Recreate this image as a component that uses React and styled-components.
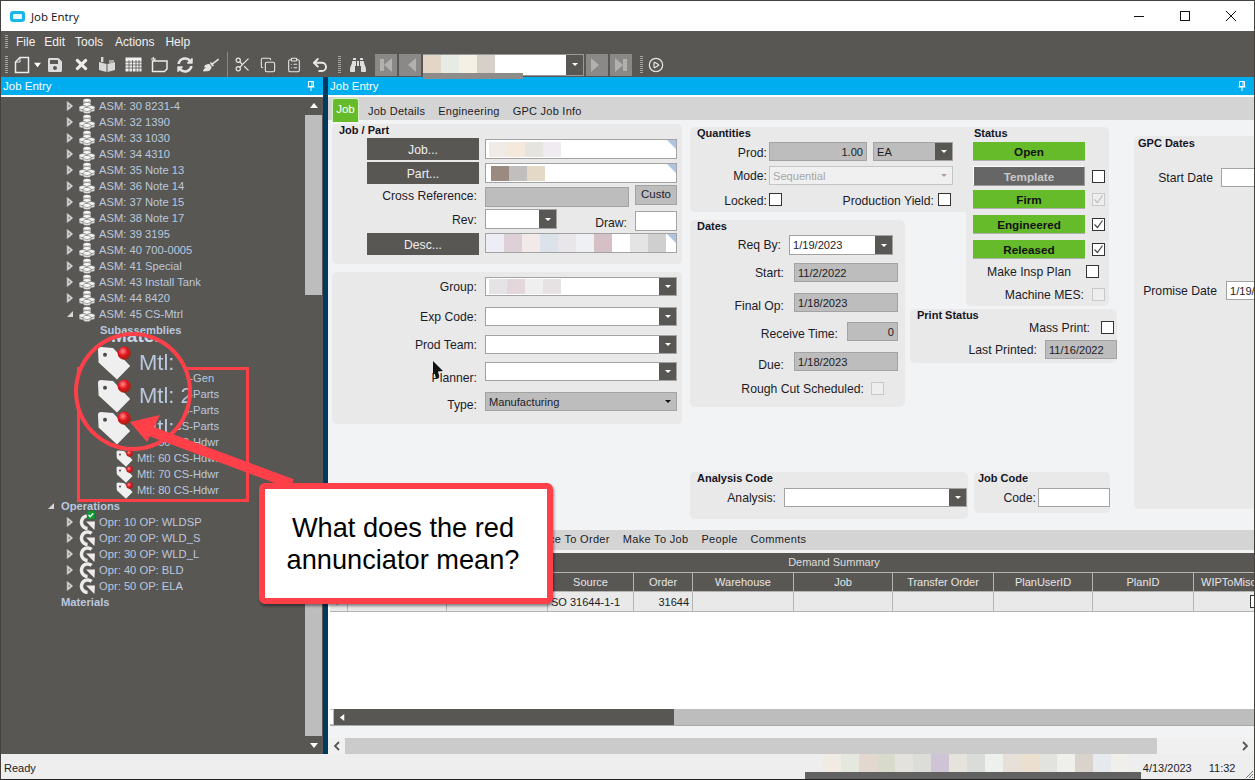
import React from "react";
import styled, { createGlobalStyle } from "styled-components";
import { Scissors, Copy, ClipboardList, Undo2, CirclePlay } from "lucide-react";
import { FaBroom, FaBinoculars, FaSave, FaTimes, FaSyncAlt } from "react-icons/fa";

const RED = "#ff4049";
const DARK = "#595754";
const BLUE = "#00adef";
const GREEN = "#66bb2a";
const FONT = `"Liberation Sans", Arial, sans-serif`;

const Global = createGlobalStyle`
  html, body { margin: 0; padding: 0; background: #fff; }
  * { box-sizing: border-box; }
`;

const Window = styled.div`
  position: relative;
  width: 1255px;
  height: 780px;
  border: 1px solid #45413c;
  border-bottom-color: #222;
  display: flex;
  flex-direction: column;
  overflow: hidden;
  font-family: ${FONT};
  font-size: 12.2px;
  color: #1c1c28;
  background: #eee;
`;

/* title bar */
const TitleBar = styled.div`
  height: 30px;
  flex: none;
  background: #fff;
  display: flex;
  align-items: center;
  padding-left: 9px;
  font-family: "Open Sans", ${FONT};
  font-size: 11.5px;
  color: #111;
`;
const AppIcon = styled.span`
  width: 15px;
  height: 11px;
  border-radius: 3px;
  background: #18b7e8;
  margin-right: 6px;
  display: flex;
  align-items: center;
  justify-content: center;
  &::after {
    content: "";
    width: 9px;
    height: 5px;
    border-radius: 1px;
    background: #eaf8fd;
  }
`;
const WinControls = styled.div`
  margin-left: auto;
  display: flex;
`;
const WinButton = styled.span`
  width: 46px;
  height: 30px;
  display: flex;
  align-items: center;
  justify-content: center;
`;

/* menu and tool bars */
const Bars = styled.div`
  height: 46px;
  flex: none;
  background: ${DARK};
  color: #f1f1f1;
`;
const MenuRow = styled.div`
  height: 21px;
  display: flex;
  align-items: center;
  padding-left: 4px;
`;
const Grip = styled.span`
  width: 3px;
  height: ${(p) => p.$h || 14}px;
  flex: none;
  margin-left: ${(p) => p.$ml || 0}px;
  margin-right: ${(p) => p.$mr || 0}px;
  background: repeating-linear-gradient(to bottom, #a8a6a3 0 1px, transparent 1px 2px);
`;
const MenuItem = styled.span`
  margin-left: ${(p) => p.$ml}px;
  font-size: 12px;
`;
const ToolRow = styled.div`
  height: 25px;
  display: flex;
  align-items: center;
  padding-left: 4px;
`;
const ToolBtn = styled.span`
  width: ${(p) => p.$w || 26}px;
  height: 22px;
  flex: none;
  margin-left: ${(p) => p.$ml || 0}px;
  margin-right: ${(p) => p.$mr || 0}px;
  display: flex;
  align-items: center;
  justify-content: center;
  color: #e8e8e8;
`;
const ToolSep = styled.span`
  width: 1px;
  height: 25px;
  flex: none;
  margin: 0 1px 0 3px;
  background: #8c8a87;
`;
const NavBtn = styled.span`
  width: 22px;
  height: 22px;
  flex: none;
  margin-right: 2px;
  background: #8b8987;
  display: flex;
  align-items: center;
  justify-content: center;
`;
const NavSvg = styled.svg`
  width: 16px;
  height: 16px;
  transform: ${(p) => (p.$flip ? "scaleX(-1)" : "none")};
`;
const RecordCombo = styled.div`
  width: 161px;
  height: 22px;
  flex: none;
  margin-right: 2px;
  background: #fff;
  border: 1px solid #9a9a9a;
  border-left: none;
  display: flex;
  position: relative;
`;
const Swatches = styled.div`
  display: flex;
  height: ${(p) => p.$h}px;
  margin-left: ${(p) => p.$ml || 0}px;
  flex: none;
`;
const Swatch = styled.span`
  width: 18px;
  height: 100%;
  flex: none;
  background: ${(p) => p.$c};
`;
const RecordStrip = styled.span`
  position: absolute;
  left: 0;
  top: 18px;
  width: 100px;
  height: 6px;
  background: #8e8c8a;
`;

/* main split */
const Main = styled.div`
  flex: 1;
  min-height: 0;
  display: flex;
`;
const LeftPane = styled.div`
  width: 322px;
  flex: none;
  display: flex;
  flex-direction: column;
`;
const Splitter = styled.div`
  width: 5px;
  flex: none;
  background: #003a5c;
`;
const RightPane = styled.div`
  flex: 1;
  min-width: 0;
  display: flex;
  flex-direction: column;
  background: #f2f3f5;
`;
const PaneHeader = styled.div`
  height: 20px;
  flex: none;
  background: ${BLUE};
  border-bottom: 2px solid #fff;
  color: #fff;
  font-size: 11.5px;
  display: flex;
  align-items: center;
  justify-content: space-between;
  padding: 0 8px 0 ${(p) => p.$pl}px;
`;
const TreeWrap = styled.div`
  flex: 1;
  min-height: 0;
  display: flex;
  background: ${DARK};
`;
const Tree = styled.div`
  flex: 1;
  padding-top: 1px;
  overflow: hidden;
`;
const TreeRow = styled.div`
  height: 16px;
  display: flex;
  align-items: center;
  padding-left: ${(p) => p.$indent}px;
  color: #b9c8de;
  font-size: 11.2px;
  font-weight: ${(p) => (p.$bold ? 700 : 400)};
  white-space: nowrap;
`;
const Expander = styled.svg`
  width: 8px;
  height: 12px;
  flex: none;
  margin-right: ${(p) => p.$mr}px;
`;
const TreeIcon = styled.svg`
  width: 16px;
  height: 16px;
  flex: none;
  overflow: visible;
  margin-right: 4px;
`;
const VScroll = styled.div`
  width: 17px;
  flex: none;
  margin-right: 1px;
  display: flex;
  flex-direction: column;
  background: #bdbdbd;
`;
const ScrollEnd = styled.div`
  height: 18px;
  flex: none;
  background: ${DARK};
  display: flex;
  align-items: center;
  justify-content: center;
`;
const VTrack = styled.div`
  height: ${(p) => p.$h}px;
  flex: ${(p) => (p.$h ? "none" : 1)};
  background: ${(p) => (p.$thumb ? DARK : "#bdbdbd")};
`;

/* tabs */
const TabBar = styled.div`
  height: 23px;
  flex: none;
  background: #d4d4d4;
  display: flex;
  padding: 1px 0 0 4px;
`;
const ActiveTab = styled.div`
  width: 27px;
  height: 24px;
  background: ${GREEN};
  border: 1px solid #d8f0c8;
  border-bottom: none;
  border-radius: 3px 3px 0 0;
  color: #fff;
  font-size: 11.5px;
  text-align: center;
  padding-top: 4px;
  margin-right: 9px;
`;
const Tab = styled.div`
  font-size: 11px;
  letter-spacing: 0.25px;
  margin: 7px 13px 0 0;
  white-space: nowrap;
`;

/* form */
const FormArea = styled.div`
  height: 410px;
  flex: none;
  display: flex;
  padding: 4px 0 0 4px;
  overflow: hidden;
`;
const Column = styled.div`
  width: ${(p) => p.$w}px;
  flex: none;
  display: flex;
  flex-direction: column;
  gap: 8px;
`;
const MidColumn = styled.div`
  width: 427px;
  flex: none;
  margin: 3px 0 0 8px;
`;
const MidGrid = styled.div`
  display: grid;
  grid-template-columns: 215px 5px 56px 143px 8px;
  grid-template-rows: 85px 8px 86px 3px 54px 44px;
`;
const Panel = styled.section`
  background: #e9e9e9;
  border-radius: ${(p) => p.$radius || "5px"};
  height: ${(p) => (p.$h ? `${p.$h}px` : "auto")};
  width: ${(p) => (p.$w ? `${p.$w}px` : "auto")};
  padding-top: ${(p) => p.$pt || 0}px;
  overflow: hidden;
  grid-column: ${(p) => p.$col || "auto"};
  grid-row: ${(p) => p.$row || "auto"};
`;
const PanelTitle = styled.div`
  font-weight: 700;
  font-size: 11px;
  line-height: 12px;
  height: 12px;
  padding-left: ${(p) => p.$pl || 7}px;
  color: #15151f;
`;
const Row = styled.div`
  display: flex;
  align-items: center;
  height: ${(p) => p.$h}px;
  margin-top: ${(p) => p.$mt || 0}px;
`;
const Label = styled.label`
  width: ${(p) => p.$w}px;
  flex: none;
  text-align: right;
  margin-right: ${(p) => p.$gap}px;
  white-space: nowrap;
  padding-top: ${(p) => p.$pt || 0}px;
`;
const tones = {
  white: "#fff",
  gray: "#bdbdbd",
  disabled: "#f0f0f0",
};
const Field = styled.div`
  position: relative;
  width: ${(p) => p.$w}px;
  height: ${(p) => p.$h || 19}px;
  flex: none;
  background: ${(p) => tones[p.$tone || "white"]};
  border: 1px solid ${(p) => (p.$tone === "disabled" ? "#c4c4c4" : "#a3a3a3")};
  margin-top: ${(p) => p.$mt || 0}px;
  align-self: ${(p) => p.$self || "auto"};
  margin-left: ${(p) => p.$ml || 0}px;
  display: flex;
  align-items: center;
  justify-content: ${(p) => (p.$right ? "flex-end" : "flex-start")};
  padding: 0 3px;
  font-size: 11.1px;
  color: ${(p) => (p.$muted ? "#a5a5a5" : "#1c1c28")};
  overflow: hidden;
  white-space: nowrap;
`;
const Corner = styled.span`
  position: absolute;
  top: 0;
  right: 0;
  border-style: solid;
  border-width: 0 9px 9px 0;
  border-color: transparent #aec4e0 transparent transparent;
`;
const Caret = styled.span`
  position: absolute;
  top: 0;
  right: 0;
  bottom: 0;
  width: ${(p) => p.$w || 17}px;
  background: ${(p) => (p.$plain ? "transparent" : DARK)};
  display: flex;
  align-items: center;
  justify-content: center;
  &::after {
    content: "";
    border-style: solid;
    border-width: 3px 3.5px 0;
    border-color: ${(p) => p.$color || "#fff"} transparent transparent;
  }
`;
const DarkButton = styled.div`
  width: 112px;
  height: 22px;
  flex: none;
  margin: 0 6px 0 35px;
  padding-top: 1px;
  background: ${DARK};
  color: #eee;
  display: flex;
  align-items: center;
  justify-content: center;
`;
const CustoButton = styled.div`
  width: 42px;
  height: 20px;
  flex: none;
  align-self: flex-start;
  margin-left: 6px;
  background: #bdbdbd;
  border: 1px solid #a3a3a3;
  font-size: 11.5px;
  text-align: center;
  line-height: 16px;
`;
const Check = styled.span`
  width: 13px;
  height: 13px;
  flex: none;
  border: 1px solid ${(p) => (p.$off ? "#c9c9c9" : "#333")};
  background: ${(p) => (p.$off ? "#eeeeee" : "#fff")};
  margin-left: ${(p) => p.$ml || 0}px;
  display: flex;
  align-items: center;
  justify-content: center;
`;
const StatusButton = styled.div`
  width: 112px;
  height: ${(p) => p.$h || 19}px;
  flex: none;
  margin-left: 7px;
  padding-top: 1px;
  background: ${(p) => (p.$gray ? "#666" : GREEN)};
  color: ${(p) => (p.$gray ? "#c8c8c8" : "#111")};
  font-weight: 700;
  font-size: 11.7px;
  display: flex;
  align-items: center;
  justify-content: center;
  border: ${(p) => (p.$gray ? "1px solid #fff" : "none")};
  border-right-color: ${(p) => (p.$gray ? "#9c9c9c" : "transparent")};
  border-bottom: 1px solid ${(p) => (p.$gray ? "#9c9c9c" : "#b0b0b0")};
`;
const BottomRow = styled.div`
  display: flex;
  align-items: flex-start;
  gap: 6px;
  margin-top: 65px;
`;
const GpcPanel = styled(Panel)`
  width: 125px;
  height: 373px;
  flex: none;
  margin: 12px 0 0 17px;
  padding-top: 1px;
`;

/* lower grid */
const SubTabs = styled.div`
  height: 20px;
  flex: none;
  background: #d4d4d4;
  display: flex;
  align-items: center;
  padding: 0 0 2px 190px;
  gap: 13px;
  font-size: 11px;
  letter-spacing: 0.32px;
  margin-bottom: 3px;
  white-space: nowrap;
`;
const GridWrap = styled.div`
  flex: 1;
  min-height: 0;
  padding-left: 2px;
  display: flex;
  flex-direction: column;
  background: #fff;
  overflow: hidden;
`;
const GridTitle = styled.div`
  width: 1008px;
  height: 19px;
  flex: none;
  background: ${DARK};
  color: #ddd;
  font-size: 11px;
  text-align: center;
  line-height: 19px;
`;
const GridLine = styled.div`
  display: flex;
  height: 20px;
  flex: none;
  width: 1008px;
  background: ${(p) => (p.$head ? DARK : "#e9e9e9")};
  color: ${(p) => (p.$head ? "#e6e6e6" : "#1c1c28")};
  border-bottom: 1px solid #b4b4b4;
  border-top: ${(p) => (p.$head ? "1px solid #b4b4b4" : "none")};
`;
const GridCell = styled.div`
  width: ${(p) => p.$w}px;
  flex: none;
  border-right: 1px solid #b4b4b4;
  font-size: 11px;
  display: flex;
  align-items: center;
  justify-content: ${(p) => p.$justify || "center"};
  padding: 0 3px 0 ${(p) => p.$pl || 3}px;
  white-space: nowrap;
  overflow: hidden;
`;
const GridBlank = styled.div`
  flex: 1;
`;
const GridScroll = styled.div`
  height: 17px;
  flex: none;
  background: #bdbdbd;
  border-bottom: 1px solid #a9a9a9;
  display: flex;
`;
const GridTick = styled.span`
  width: 3px;
  flex: none;
  background: #fff;
  margin: 1px 1px 1px 0;
`;
const GridThumb = styled.div`
  width: 340px;
  flex: none;
  background: ${DARK};
  display: flex;
  align-items: center;
  padding-left: 5px;
`;
const Gap = styled.div`
  height: ${(p) => p.$h}px;
  flex: none;
`;
const OuterScroll = styled.div`
  height: 16px;
  flex: none;
  background: #f0f0f0;
  display: flex;
  align-items: center;
  padding-right: 5px;
`;
const OuterArrow = styled.span`
  width: 17px;
  flex: none;
  display: flex;
  align-items: center;
  justify-content: center;
`;
const OuterThumb = styled.div`
  width: 812px;
  height: 16px;
  flex: none;
  margin-right: auto;
  background: #cbcbcb;
`;

/* status bar */
const StatusBar = styled.div`
  height: 25px;
  flex: none;
  background: #eee;
  display: flex;
  padding-left: 3px;
  position: relative;
`;
const StatusText = styled.span`
  margin: ${(p) => `8px 0 0 ${p.$ml}px`};
  font-size: 11px;
  white-space: nowrap;
`;
const Redacted = styled.div`
  width: 336px;
  flex: none;
  margin-left: 769px;
  display: flex;
  flex-direction: column;
`;
const RedactBar = styled.div`
  height: 7px;
  background: #616161;
`;
const ResizeGrip = styled.svg`
  position: absolute;
  right: 0;
  bottom: 0;
  width: 10px;
  height: 10px;
`;

/* annotation drawn on top of the screenshot */
const ArrowLayer = styled.svg`
  position: absolute;
  left: -1px;
  top: -1px;
  width: 1255px;
  height: 780px;
  pointer-events: none;
`;
const RedBox = styled.div`
  position: absolute;
  left: 76px;
  top: 366px;
  width: 172px;
  height: 135px;
  border: 3px solid ${RED};
`;
const Magnifier = styled.div`
  position: absolute;
  left: 73px;
  top: 331px;
  width: 118px;
  height: 119px;
  border: 4px solid ${RED};
  border-radius: 50%;
  background: ${DARK};
  overflow: hidden;
`;
const MagFragment = styled.div`
  height: 11px;
  overflow: hidden;
  color: #cbd6e8;
  font-weight: 700;
  font-size: 19px;
  line-height: 0px;
  padding-left: 33px;
`;
const MagRow = styled.div`
  height: 32.5px;
  display: flex;
  align-items: center;
  padding-left: 19px;
  color: #b9c8de;
  font-size: 22px;
  white-space: nowrap;
  filter: blur(0.3px);
  span { margin-left: 8px; }
`;
const Callout = styled.div`
  position: absolute;
  left: 258px;
  top: 482px;
  width: 294px;
  height: 121px;
  background: #fff;
  border: 6px solid ${RED};
  border-radius: 6px;
  box-shadow: 1px 2px 3px rgba(0, 0, 0, 0.45);
  color: #000;
  font-size: 27.2px;
  line-height: 32px;
  text-align: center;
  padding: 23px 6px 0 0;
  white-space: nowrap;
`;
const MouseCursor = styled.svg`
  position: absolute;
  left: 431px;
  top: 360px;
  width: 12px;
  height: 18px;
`;

const Tri = ({ dir = "down", color = "#fff", size = 8 }) => {
  const pts = {
    up: "0,6 4,1 8,6",
    down: "0,2 8,2 4,7",
    left: "6,0 6,8 1,4",
    right: "2,0 2,8 7,4",
  };
  return (
    <svg width={size} height={size} viewBox="0 0 8 8">
      <polygon points={pts[dir]} fill={color} />
    </svg>
  );
};

const ExpandClosed = () => (
  <Expander $mr={5} viewBox="0 0 8 12">
    <polygon points="1,1 7,6 1,11" fill="#e6e6e6" stroke="#8f8f8f" strokeWidth="0.8" />
    <polygon points="2.5,4 5,6 2.5,8" fill="#8c8c8c" />
  </Expander>
);
const ExpandOpen = ({ mr = 5 }) => (
  <Expander $mr={mr} viewBox="0 0 8 12">
    <polygon points="7,3 7,9 1,9" fill="#d6d6d6" />
  </Expander>
);

const AsmIcon = () => {
  const disk = (x, y, key) => (
    <g key={key}>
      <path d={`M${x - 3.9} ${y}v2.4a3.9 2 0 0 0 7.800 0V${y}z`} fill="#dedede" stroke={DARK} strokeWidth="0.5" />
      <ellipse cx={x} cy={y} rx="3.9" ry="2" fill="#f6f6f6" stroke={DARK} strokeWidth="0.5" />
    </g>
  );
  return (
    <TreeIcon viewBox="0 0 16 16">
      {disk(8, 2.4, "a")}
      {disk(8, 6.4, "b")}
      {disk(4, 9.6, "c")}
      {disk(12, 9.6, "d")}
      {disk(8, 11.4, "e")}
    </TreeIcon>
  );
};

const OprIcon = ({ done }) => (
  <TreeIcon viewBox="0 0 16 16">
    <path d="M12.600 3.400A6.200 6.200 0 1 0 8.600 14.400" fill="none" stroke="#ececec" strokeWidth="3.400" />
    <polygon points="7,7.600 16,7.600 15.400,16" fill="#ececec" />
    {done && (
      <g>
        <rect x="8" y="-3" width="8" height="8" fill="#0e9a35" stroke="#0b6d27" strokeWidth="0.4" />
        <path d="M9.600 1l1.600 1.800 3-3.400" fill="none" stroke="#fff" strokeWidth="1.400" />
      </g>
    )}
  </TreeIcon>
);

const TagSvg = styled.svg`
  width: ${(p) => p.$size}px;
  height: ${(p) => p.$size}px;
  flex: none;
  margin-right: ${(p) => p.$mr || 0}px;
  overflow: visible;
`;
const TagIcon = ({ size = 17, mr = 4 }) => (
  <TagSvg $size={size} $mr={mr} viewBox="0 0 17 17">
    <defs>
      <radialGradient id="ball" cx="0.4" cy="0.35" r="0.7">
        <stop offset="0" stopColor="#ff8a8a" />
        <stop offset="0.5" stopColor="#e0141c" />
        <stop offset="1" stopColor="#8f2a10" />
      </radialGradient>
    </defs>
    <path d="M0.500 2Q0.500 .5 2 .5L8 1 16.600 10 10 16.800 .8 8.200Z" fill="#efefef" />
    <circle cx="4" cy="4.400" r="1" fill="#4a4a4a" />
    <circle cx="13.600" cy="3.600" r="3.300" fill="url(#ball)" />
  </TagSvg>
);

const DocIcon = () => (
  <svg width="16" height="18" viewBox="0 0 16 18">
    <path d="M6 1.500h8.500v15H1.500V6z" fill="none" stroke="#ececec" strokeWidth="1.500" />
    <path d="M6 1.500V6H1.500" fill="none" stroke="#ececec" strokeWidth="1" />
  </svg>
);
const BookIcon = () => (
  <svg width="18" height="18" viewBox="0 0 18 18">
    <path d="M1 6l7.500 2v8L1 14zM17 6l-7.500 2v8L17 14z" fill="#d8d8d8" />
    <rect x="3" y="1" width="2.400" height="5" fill="#d8d8d8" />
    <rect x="11" y="4" width="5" height="3" fill="#a9a9a9" />
  </svg>
);
const TableIcon = () => (
  <svg width="17" height="15" viewBox="0 0 17 15">
    <rect x="0.500" y="0.500" width="16" height="14" fill="#f0f0f0" />
    <path d="M4 3v12M7.500 3v12M11 3v12M14 3v12M0 5h17M0 8h17M0 11h17" stroke={DARK} strokeWidth="0.800" />
  </svg>
);
const FolderIcon = () => (
  <svg width="17" height="17" viewBox="0 0 17 17">
    <path d="M1.500 5h14.500v8l-2.500 2.500H1.500z" fill="none" stroke="#ececec" strokeWidth="1.500" />
    <path d="M2 1l1.500 4M0 3h5" stroke="#ececec" strokeWidth="1.200" />
  </svg>
);
const NavIcon = ({ flip, bar }) => (
  <NavSvg $flip={flip} viewBox="0 0 16 16">
    {bar && <rect x="2" y="2" width="4" height="12" fill="#b3b1af" />}
    <polygon points="14,1 14,15 6,8" fill="#b3b1af" />
  </NavSvg>
);
const Tick = ({ color = "#444" }) => (
  <svg width="11" height="11" viewBox="0 0 11 11">
    <path d="M1.500 5.500l3 3 5-7" fill="none" stroke={color} strokeWidth="1.200" />
  </svg>
);
const PinIcon = () => (
  <svg width="8" height="10" viewBox="0 0 8 10">
    <path d="M1.500 .5h5v5h-5zM.5 6h7M4 6v4M5 1v4" fill="none" stroke="#fff" strokeWidth="1" />
  </svg>
);

const asmRows = [
  "30 8231-4", "32 1390", "33 1030", "34 4310", "35 Note 13", "36 Note 14", "37 Note 15",
  "38 Note 17", "39 3195", "40 700-0005", "41 Special", "43 Install Tank", "44 8420",
];
const mtlRows = [
  "10 CS-Gen", "20 CS-Parts", "30 CS-Parts", "40 CS-Parts", "50 CS-Hdwr", "60 CS-Hdwr", "70 CS-Hdwr", "80 CS-Hdwr",
];
const oprRows = ["10 OP: WLDSP", "20 OP: WLD_S", "30 OP: WLD_L", "40 OP: BLD", "50 OP: ELA"];

const recordColors = ["#e3d6c6", "#e6ebe3", "#f4f1e4", "#d6d0c8", "#fff"];
const jobColors = ["#f0ebe7", "#f5e9dc", "#e6e4de", "#f0ebf0"];
const partColors = ["#9b8a80", "#c0bfbd", "#e4d9c6"];
const descColors = ["#ecedf5", "#ddd0d6", "#f2e9e9", "#dce2e9", "#e8e6e9", "#eef0f3", "#d5c0c5", "#fff", "#e4e4e4", "#d0cfcf"];
const groupColors = ["#e6e3e6", "#e3d7dc", "#efefef", "#e6e2e4"];
const statusColors = [
  "#f0ece4", "#e5e8df", "#e2d8cf", "#d8dacb", "#e3e2dc", "#dcdcd8", "#cfc4d6", "#e6e2dc", "#d9dcd9",
  "#eef0ee", "#e6e0d9", "#ebe0d0", "#e2e2df", "#efefeb", "#d9d3cc", "#e6eaee", "#f0efeb",
];

const gridCols = [
  ["", 18], ["", 99], ["", 101], ["Source", 86], ["Order", 59], ["Warehouse", 101], ["Job", 99],
  ["Transfer Order", 101], ["PlanUserID", 99], ["PlanID", 101],
];

const paint = (colors) => colors.map((c, i) => <Swatch key={i} $c={c} />);

const Combo = ({ w, h, tone, mt, ml, children, caretColor, plain, muted }) => (
  <Field $w={w} $h={h} $tone={tone} $mt={mt} $ml={ml} $muted={muted}>
    {children}
    <Caret $color={caretColor} $plain={plain} />
  </Field>
);

export default function App() {
  return (
    <Window>
      <Global />
      <TitleBar>
        <AppIcon />
        Job Entry
        <WinControls>
          <WinButton>
            <svg width="10" height="10"><path d="M0 5.500h10" stroke="#111" /></svg>
          </WinButton>
          <WinButton>
            <svg width="10" height="10"><rect x=".5" y=".5" width="9" height="9" fill="none" stroke="#111" /></svg>
          </WinButton>
          <WinButton>
            <svg width="10" height="10"><path d="M0 0l10 10M10 0L0 10" stroke="#111" /></svg>
          </WinButton>
        </WinControls>
      </TitleBar>

      <Bars>
        <MenuRow>
          <Grip $h={13} />
          <MenuItem $ml={8}>File</MenuItem>
          <MenuItem $ml={9}>Edit</MenuItem>
          <MenuItem $ml={10}>Tools</MenuItem>
          <MenuItem $ml={12}>Actions</MenuItem>
          <MenuItem $ml={11}>Help</MenuItem>
        </MenuRow>
        <ToolRow>
          <Grip $h={18} />
          <ToolBtn $w={20} $ml={4}><DocIcon /></ToolBtn>
          <ToolBtn $w={10}><Tri color="#fff" size={7} /></ToolBtn>
          <ToolBtn><FaSave size={16} color="#dcdcdc" /></ToolBtn>
          <ToolBtn><FaTimes size={17} color="#ececec" /></ToolBtn>
          <ToolBtn><BookIcon /></ToolBtn>
          <ToolBtn><TableIcon /></ToolBtn>
          <ToolBtn><FolderIcon /></ToolBtn>
          <ToolBtn><FaSyncAlt size={16} color="#e4e4e4" /></ToolBtn>
          <ToolBtn><FaBroom size={16} color="#e4e4e4" /></ToolBtn>
          <ToolSep />
          <ToolBtn><Scissors size={17} strokeWidth={1.6} /></ToolBtn>
          <ToolBtn><Copy size={16} strokeWidth={1.6} /></ToolBtn>
          <ToolBtn><ClipboardList size={16} strokeWidth={1.6} /></ToolBtn>
          <ToolBtn><Undo2 size={18} strokeWidth={2.6} /></ToolBtn>
          <Grip $h={18} $ml={5} $mr={4} />
          <ToolBtn $mr={4}><FaBinoculars size={16} color="#dedede" /></ToolBtn>
          <NavBtn><NavIcon bar /></NavBtn>
          <NavBtn><NavIcon /></NavBtn>
          <RecordCombo>
            <Swatches $h={18}>{paint(recordColors)}</Swatches>
            <RecordStrip />
            <Caret />
          </RecordCombo>
          <NavBtn><NavIcon flip /></NavBtn>
          <NavBtn><NavIcon flip bar /></NavBtn>
          <Grip $h={18} $ml={6} />
          <ToolBtn $w={22} $ml={2}><CirclePlay size={16} strokeWidth={1.8} /></ToolBtn>
        </ToolRow>
      </Bars>

      <Main>
        <LeftPane>
          <PaneHeader $pl={2}>
            Job Entry
            <PinIcon />
          </PaneHeader>
          <TreeWrap>
            <Tree>
              {asmRows.map((r) => (
                <TreeRow key={r} $indent={65}>
                  <ExpandClosed />
                  <AsmIcon />
                  ASM: {r}
                </TreeRow>
              ))}
              <TreeRow $indent={65}>
                <ExpandOpen />
                <AsmIcon />
                ASM: 45 CS-Mtrl
              </TreeRow>
              <TreeRow $indent={99} $bold>Subassemblies</TreeRow>
              <TreeRow $indent={99} $bold>Materials</TreeRow>
              <TreeRow $indent={116} />
              {mtlRows.map((r) => (
                <TreeRow key={r} $indent={115}>
                  <TagIcon />
                  Mtl: {r}
                </TreeRow>
              ))}
              <TreeRow $indent={46} $bold>
                <ExpandOpen mr={6} />
                Operations
              </TreeRow>
              {oprRows.map((r, i) => (
                <TreeRow key={r} $indent={65}>
                  <ExpandClosed />
                  <OprIcon done={i === 0} />
                  Opr: {r}
                </TreeRow>
              ))}
              <TreeRow $indent={60} $bold>Materials</TreeRow>
            </Tree>
            <VScroll>
              <ScrollEnd><Tri dir="up" /></ScrollEnd>
              <VTrack $h={180} />
              <VTrack $h={190} $thumb />
              <VTrack />
              <ScrollEnd><Tri /></ScrollEnd>
            </VScroll>
          </TreeWrap>
        </LeftPane>
        <Splitter />
        <RightPane>
          <PaneHeader $pl={2}>
            Job Entry
            <PinIcon />
          </PaneHeader>
          <TabBar>
            <ActiveTab>Job</ActiveTab>
            <Tab>Job Details</Tab>
            <Tab>Engineering</Tab>
            <Tab>GPC Job Info</Tab>
          </TabBar>

          <FormArea>
            <Column $w={350}>
              <Panel $h={140}>
                <PanelTitle>Job / Part</PanelTitle>
                <Row $h={22} $mt={2}>
                  <DarkButton>Job...</DarkButton>
                  <Field $w={192} $h={20}><Swatches $h={15}>{paint(jobColors)}</Swatches><Corner /></Field>
                </Row>
                <Row $h={22} $mt={2}>
                  <DarkButton>Part...</DarkButton>
                  <Field $w={192} $h={20}><Swatches $h={15} $ml={2}>{paint(partColors)}</Swatches><Corner /></Field>
                </Row>
                <Row $h={22} $mt={1}>
                  <Label $w={145} $gap={8}>Cross Reference:</Label>
                  <Field $w={144} $h={20} $tone="gray" $mt={2} $self="flex-start" />
                  <CustoButton>Custo</CustoButton>
                </Row>
                <Row $h={22} $mt={2}>
                  <Label $w={145} $gap={8}>Rev:</Label>
                  <Field $w={72} $h={20} $self="flex-start"><Caret /></Field>
                  <Label $w={70} $gap={8} $pt={6}>Draw:</Label>
                  <Field $w={42} $h={20} $mt={2} $self="flex-start" />
                </Row>
                <Row $h={22} $mt={2}>
                  <DarkButton>Desc...</DarkButton>
                  <Field $w={192} $h={20} $self="flex-start"><Swatches $h={18} $ml={-3}>{paint(descColors)}</Swatches><Corner /></Field>
                </Row>
              </Panel>
              <Panel $h={152} $pt={5}>
                <Row $h={19}>
                  <Label $w={145} $gap={8}>Group:</Label>
                  <Combo w={192}><Swatches $h={15}>{paint(groupColors)}</Swatches></Combo>
                </Row>
                <Row $h={19} $mt={11}>
                  <Label $w={145} $gap={8}>Exp Code:</Label>
                  <Combo w={192} />
                </Row>
                <Row $h={19} $mt={9}>
                  <Label $w={145} $gap={8}>Prod Team:</Label>
                  <Combo w={192} />
                </Row>
                <Row $h={19} $mt={8}>
                  <Label $w={145} $gap={8} $pt={12}>Planner:</Label>
                  <Combo w={192} />
                </Row>
                <Row $h={19} $mt={11}>
                  <Label $w={145} $gap={8} $pt={6}>Type:</Label>
                  <Combo w={192} tone="gray" plain caretColor="#111">Manufacturing</Combo>
                </Row>
              </Panel>
            </Column>

            <MidColumn>
              <MidGrid>
                <Panel $col="1 / 4" $row="1" $radius="5px 0 0 5px">
                  <PanelTitle>Quantities</PanelTitle>
                  <Row $h={19} $mt={3}>
                    <Label $w={77} $gap={2} $pt={2}>Prod:</Label>
                    <Field $w={98} $tone="gray" $right>1.00</Field>
                    <Combo w={80} tone="gray" ml={6}>EA</Combo>
                  </Row>
                  <Row $h={19} $mt={5}>
                    <Label $w={77} $gap={2}>Mode:</Label>
                    <Combo w={184} tone="disabled" plain caretColor="#b39aa5" muted>Sequential</Combo>
                  </Row>
                  <Row $h={13} $mt={8}>
                    <Label $w={77} $gap={2} $pt={2}>Locked:</Label>
                    <Check />
                    <Label $w={152} $gap={4} $pt={2}>Production Yield:</Label>
                    <Check />
                  </Row>
                </Panel>
                <Panel $col="1" $row="3 / 7">
                  <PanelTitle>Dates</PanelTitle>
                  <Row $h={20} $mt={3}>
                    <Label $w={91} $gap={8}>Req By:</Label>
                    <Combo w={104} h={20}>1/19/2023</Combo>
                  </Row>
                  <Row $h={19} $mt={8}>
                    <Label $w={94} $gap={10}>Start:</Label>
                    <Field $w={104} $tone="gray">11/2/2022</Field>
                  </Row>
                  <Row $h={19} $mt={11}>
                    <Label $w={94} $gap={10} $pt={6}>Final Op:</Label>
                    <Field $w={104} $tone="gray">1/18/2023</Field>
                  </Row>
                  <Row $h={19} $mt={10}>
                    <Label $w={148} $gap={9} $pt={5}>Receive Time:</Label>
                    <Field $w={51} $tone="gray" $right>0</Field>
                  </Row>
                  <Row $h={19} $mt={11}>
                    <Label $w={94} $gap={10} $pt={6}>Due:</Label>
                    <Field $w={104} $tone="gray">1/18/2023</Field>
                  </Row>
                  <Row $h={13} $mt={11}>
                    <Label $w={174} $gap={7} $pt={1}>Rough Cut Scheduled:</Label>
                    <Check $off />
                  </Row>
                </Panel>
                <Panel $col="4" $row="1 / 4" $radius="0 5px 5px 5px">
                  <PanelTitle $pl={8}>Status</PanelTitle>
                  <Row $h={19} $mt={3}><StatusButton>Open</StatusButton></Row>
                  <Row $h={20} $mt={5}>
                    <StatusButton $gray $h={20}>Template</StatusButton>
                    <Check $ml={7} />
                  </Row>
                  <Row $h={19} $mt={4}>
                    <StatusButton>Firm</StatusButton>
                    <Check $ml={7} $off><Tick color="#bdbdbd" /></Check>
                  </Row>
                  <Row $h={19} $mt={6}>
                    <StatusButton>Engineered</StatusButton>
                    <Check $ml={7}><Tick /></Check>
                  </Row>
                  <Row $h={19} $mt={6}>
                    <StatusButton>Released</StatusButton>
                    <Check $ml={7}><Tick /></Check>
                  </Row>
                  <Row $h={13} $mt={6}>
                    <Label $w={105} $gap={15}>Make Insp Plan</Label>
                    <Check />
                  </Row>
                  <Row $h={13} $mt={10}>
                    <Label $w={118} $gap={8}>Machine MES:</Label>
                    <Check $off />
                  </Row>
                </Panel>
                <Panel $col="3 / 6" $row="5 / 7" $h={54}>
                  <PanelTitle>Print Status</PanelTitle>
                  <Row $h={13}>
                    <Label $w={180} $gap={11}>Mass Print:</Label>
                    <Check />
                  </Row>
                  <Row $h={19} $mt={6}>
                    <Label $w={127} $gap={8}>Last Printed:</Label>
                    <Field $w={72} $tone="gray">11/16/2022</Field>
                  </Row>
                </Panel>
              </MidGrid>
              <BottomRow>
                <Panel $w={278} $h={47}>
                  <PanelTitle>Analysis Code</PanelTitle>
                  <Row $h={19} $mt={4}>
                    <Label $w={86} $gap={8}>Analysis:</Label>
                    <Combo w={183} />
                  </Row>
                </Panel>
                <Panel $w={136} $h={41}>
                  <PanelTitle $pl={4}>Job Code</PanelTitle>
                  <Row $h={19} $mt={4}>
                    <Label $w={62} $gap={2}>Code:</Label>
                    <Field $w={72} />
                  </Row>
                </Panel>
              </BottomRow>
            </MidColumn>

            <GpcPanel>
              <PanelTitle $pl={4}>GPC Dates</PanelTitle>
              <Row $h={19} $mt={19}>
                <Label $w={79} $gap={8}>Start Date</Label>
                <Field $w={50} />
              </Row>
              <Row $h={19} $mt={94}>
                <Label $w={83} $gap={9}>Promise Date</Label>
                <Field $w={50}>1/19/2023</Field>
              </Row>
            </GpcPanel>
          </FormArea>

          <SubTabs>
            <span>Produce To Order</span>
            <span>Make To Job</span>
            <span>People</span>
            <span>Comments</span>
          </SubTabs>
          <GridWrap>
            <GridTitle>Demand Summary</GridTitle>
            <GridLine $head>
              {gridCols.map(([t, w], i) => (
                <GridCell key={i} $w={w}>{t}</GridCell>
              ))}
              <GridCell $w={101} $justify="flex-start" $pl={7}>WIPToMisc</GridCell>
            </GridLine>
            <GridLine>
              <GridCell $w={18}><Tri dir="right" color="#111" size={7} /></GridCell>
              <GridCell $w={99} />
              <GridCell $w={101} />
              <GridCell $w={86} $justify="flex-start">SO 31644-1-1</GridCell>
              <GridCell $w={59} $justify="flex-end">31644</GridCell>
              <GridCell $w={101} />
              <GridCell $w={99} />
              <GridCell $w={101} />
              <GridCell $w={99} />
              <GridCell $w={101} />
              <GridCell $w={101} $justify="flex-start" $pl={56}><Check /></GridCell>
            </GridLine>
            <GridBlank />
            <GridScroll>
              <GridTick />
              <GridThumb><Tri dir="left" size={7} /></GridThumb>
            </GridScroll>
          </GridWrap>
          <Gap $h={12} />
          <OuterScroll>
            <OuterArrow>
              <svg width="10" height="10" viewBox="0 0 10 10">
                <path d="M7 1L3 5l4 4" fill="none" stroke="#555" strokeWidth="1.800" />
              </svg>
            </OuterArrow>
            <OuterThumb />
            <svg width="8" height="10" viewBox="0 0 8 10">
              <path d="M2 1l4 4-4 4" fill="none" stroke="#555" strokeWidth="1.800" />
            </svg>
          </OuterScroll>
        </RightPane>
      </Main>

      <StatusBar>
        <StatusText $ml={0}>Ready</StatusText>
        <Redacted>
          <Swatches $h={18} $ml={18}>{paint(statusColors)}</Swatches>
          <RedactBar />
        </Redacted>
        <StatusText $ml={2}>4/13/2023</StatusText>
        <StatusText $ml={17}>11:32</StatusText>
        <ResizeGrip viewBox="0 0 10 10">
          <path d="M9 2L2 9M9 5L5 9M9 8L8 9" stroke="#777" strokeWidth="1" />
        </ResizeGrip>
      </StatusBar>

      {/* annotation layer */}
      <RedBox />
      <Magnifier>
        <MagFragment>Materials</MagFragment>
        <MagRow><TagIcon size={34} mr={0} /><span>Mtl:</span></MagRow>
        <MagRow><TagIcon size={34} mr={0} /><span>Mtl: 2</span></MagRow>
        <MagRow><TagIcon size={34} mr={0} /><span>Mtl:</span></MagRow>
      </Magnifier>
      <ArrowLayer viewBox="0 0 1255 780">
        <path d="M150 431L292 484" stroke={RED} strokeWidth="10" />
        <polygon points="130,422 147,442 160,415" fill={RED} />
      </ArrowLayer>
      <Callout>
        What does the red
        <br />
        annunciator mean?
      </Callout>
      <MouseCursor viewBox="0 0 12 18">
        <path d="M1 0l10 10-5 .5 1 6-3 1-1.500-6L1 14z" fill="#111" />
      </MouseCursor>
    </Window>
  );
}
